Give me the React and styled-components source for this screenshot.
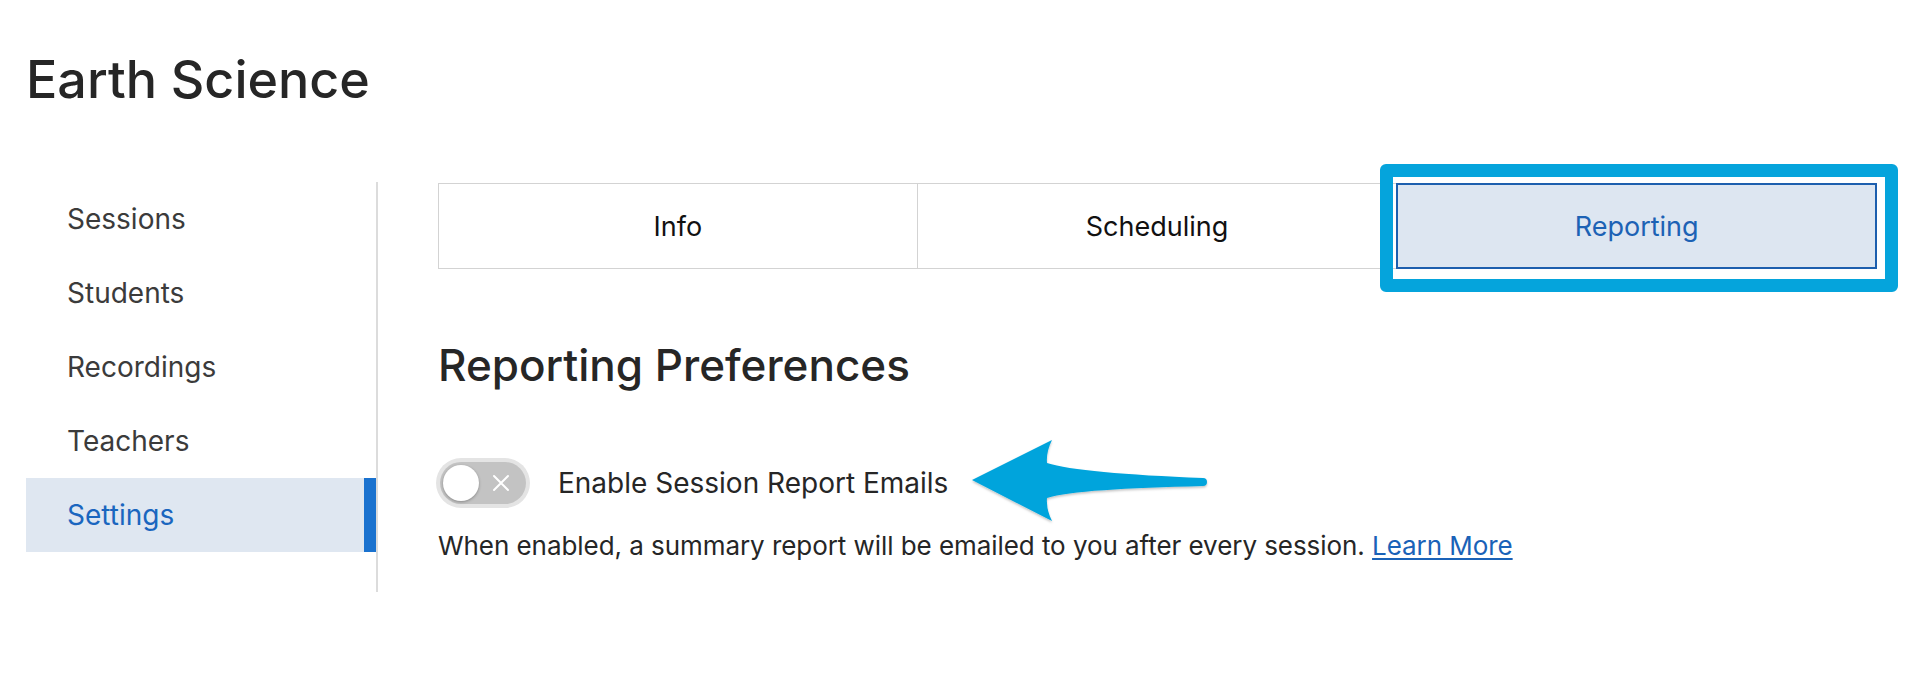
import React, { useState } from "react";
import styled, { createGlobalStyle } from "styled-components";

const GlobalStyle = createGlobalStyle`
  body {
    margin: 0;
    background: #ffffff;
    font-family: Inter, "Noto Sans", sans-serif;
  }
`;

const sections = ["Sessions", "Students", "Recordings", "Teachers", "Settings"];
const tabs = ["Info", "Scheduling", "Reporting"];

function SwitchX() {
  return (
    <svg width="18" height="18" viewBox="0 0 18 18">
      <path d="M2 2 L16 16 M16 2 L2 16" stroke="#ffffff" strokeWidth="2" strokeLinecap="round" />
    </svg>
  );
}

function CalloutArrow() {
  return (
    <ArrowSvg width="250" height="98" viewBox="0 0 250 98">
      <defs>
        <filter id="arrowShadow" x="-10%" y="-10%" width="120%" height="130%">
          <feDropShadow dx="0" dy="1.5" stdDeviation="1.2" floodColor="#000" floodOpacity="0.25" />
        </filter>
      </defs>
      <path
        d="M7 48 L87 8 Q81 20 82 31 C104 38 160 43 238 46 A4 4 0 0 1 238 54 C160 56 104 59 82 66 Q81 77 87 89 Z"
        fill="#06a4dc"
        filter="url(#arrowShadow)"
      />
    </ArrowSvg>
  );
}

function App() {
  const [active, setActive] = useState("Settings");
  const [tab, setTab] = useState("Reporting");
  const [enabled, setEnabled] = useState(false);

  return (
    <React.Fragment>
      <GlobalStyle />
      <Page>
        <Title>Earth Science</Title>
        <Layout>
          <Sidebar>
            {sections.map(name =>
              <NavItem key={name} active={name === active} onClick={() => setActive(name)}>
                {name}
              </NavItem>
            )}
          </Sidebar>
          <Main>
            <TabBar>
              {tabs.map(name =>
                <Tab key={name} active={name === tab} onClick={() => setTab(name)}>
                  {name}
                  {name === "Reporting" && <Highlight />}
                </Tab>
              )}
            </TabBar>
            <Heading>Reporting Preferences</Heading>
            <ToggleRow>
              <Switch on={enabled} onClick={() => setEnabled(!enabled)}>
                <Knob on={enabled} />
                <SwitchMark><SwitchX /></SwitchMark>
              </Switch>
              <ToggleLabel>Enable Session Report Emails</ToggleLabel>
              <CalloutArrow />
            </ToggleRow>
            <Description>
              When enabled, a summary report will be emailed to you after every session.{" "}
              <LearnMore href="#">Learn More</LearnMore>
            </Description>
          </Main>
        </Layout>
      </Page>
    </React.Fragment>
  );
}

export default App;

const Page = styled.div`
  width: 1916px;
  height: 690px;
  padding-left: 26px;
  box-sizing: border-box;
`;

const Title = styled.h1`
  margin: 0;
  padding-top: 48px;
  font-size: 52px;
  line-height: 64px;
  font-weight: 500;
  color: #262626;
`;

const Layout = styled.div`
  display: flex;
  margin-top: 70px;
  padding-right: 39px;
`;

const Sidebar = styled.nav`
  width: 350px;
  flex-shrink: 0;
  padding-bottom: 40px;
  border-right: 2px solid #dcdcdc;
`;

const NavItem = styled.div`
  height: 74px;
  line-height: 75px;
  padding-left: 41px;
  font-size: 28px;
  color: ${p => (p.active ? "#1a66bf" : "#3b3b3b")};
  background: ${p => (p.active ? "#dfe7f1" : "transparent")};
  box-shadow: ${p => (p.active ? "inset -12px 0 0 #1a72cf" : "none")};
  cursor: pointer;
`;

const Main = styled.main`
  flex: 1;
  margin-left: 60px;
  padding-top: 1px;
`;

const TabBar = styled.div`
  display: grid;
  grid-template-columns: repeat(3, 1fr);
`;

const Tab = styled.div`
  position: relative;
  height: 86px;
  box-sizing: border-box;
  margin-left: -1px;
  display: flex;
  align-items: center;
  justify-content: center;
  font-size: 27px;
  color: ${p => (p.active ? "#1c62b5" : "#111111")};
  background: ${p => (p.active ? "#dde6f1" : "#ffffff")};
  border: ${p => (p.active ? "2px solid #1d5fae" : "1px solid #d3d3d3")};
  z-index: ${p => (p.active ? 1 : 0)};
  cursor: pointer;

  &:first-child {
    margin-left: 0;
  }
`;

const Highlight = styled.span`
  position: absolute;
  left: -18px;
  right: -23px;
  top: -21px;
  bottom: -25px;
  border: 13px solid #05a4dc;
  border-radius: 6px;
  pointer-events: none;
`;

const Heading = styled.h2`
  margin: 70px 0 0;
  font-size: 44px;
  line-height: 52px;
  font-weight: 500;
  color: #262626;
`;

const ToggleRow = styled.div`
  position: relative;
  display: flex;
  align-items: center;
  height: 51px;
  margin-top: 66px;
`;

const Switch = styled.button`
  position: relative;
  width: 86px;
  height: 42px;
  margin-left: 2px;
  padding: 0;
  border: none;
  border-radius: 21px;
  background: ${p => (p.on ? "#1a72cf" : "#c3c3c3")};
  box-shadow: 0 0 0 4px #e4e4e4;
  cursor: pointer;
`;

const Knob = styled.span`
  position: absolute;
  top: 3px;
  left: ${p => (p.on ? "47px" : "3px")};
  width: 36px;
  height: 36px;
  border-radius: 50%;
  background: #ffffff;
  box-shadow: 0 1px 3px rgba(0, 0, 0, 0.3);
`;

const SwitchMark = styled.span`
  position: absolute;
  top: 12px;
  left: 52px;
  display: flex;
`;

const ToggleLabel = styled.span`
  margin-left: 32px;
  font-size: 28px;
  color: #262626;
`;

const ArrowSvg = styled.svg`
  position: absolute;
  left: 527px;
  top: -25px;
  pointer-events: none;
`;

const Description = styled.p`
  margin: 21px 0 0;
  font-size: 26px;
  line-height: 34px;
  letter-spacing: -0.06px;
  color: #262626;
`;

const LearnMore = styled.a`
  color: #1a62b8;
  text-decoration: underline;
  text-underline-offset: 3px;
`;
